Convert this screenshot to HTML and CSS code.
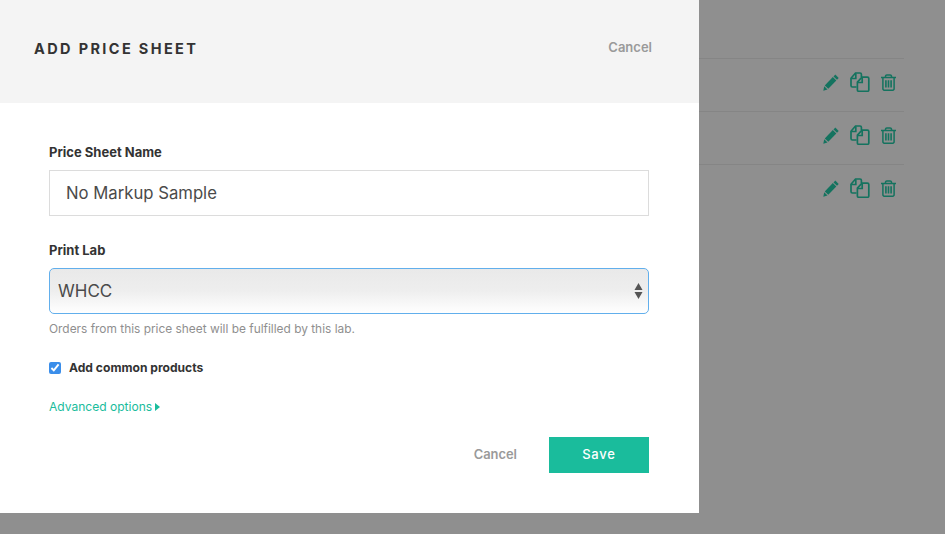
FILE: index.html
```html
<!DOCTYPE html>
<html lang="en">
<head>
<meta charset="utf-8">
<title>Add Price Sheet</title>
<link rel="stylesheet" href="styles.css">
</head>
<body>
<main class="page">
  <ul class="sheet-list">
    <li class="sheet-row">
      <svg class="icon icon-pencil" viewBox="0 0 16 17"><path d="M12.300.6 15.700 3.900 14 5.800 10.500 2.400Z"/><path d="M9.800 3.100 13.300 6.500 5.300 14.800 1.800 11.400Z"/><path d="M1.200 12.200 4.500 15.500.3 16.700Z"/></svg>
      <svg class="icon icon-copy" viewBox="0 0 20 20"><path d="M6.500 15H2.400A1.400 1.400 0 0 1 1 13.600V6.200L5.500 1H10A1.400 1.400 0 0 1 11.400 2.400V5"/><path d="M5.800 1.500V6.500H1.300"/><path d="M8.800 19.300A1.400 1.400 0 0 1 7.400 17.900V10.200L12 5.200H17.400A1.400 1.400 0 0 1 18.800 6.600V17.900A1.400 1.400 0 0 1 17.400 19.300Z"/><path d="M12.200 5.500V10.500H7.700"/></svg>
      <svg class="icon icon-trash" viewBox="0 0 15 17"><path d="M0 3.500H15"/><path d="M4.500 3.300V2.100A1.300 1.300 0 0 1 5.800.9H9.200A1.300 1.300 0 0 1 10.500 2.100V3.300"/><path d="M1.900 3.500V14.700A1.600 1.600 0 0 0 3.500 16.300H11.500A1.600 1.600 0 0 0 13.100 14.700V3.500"/><path class="bars" d="M4.900 6.300V13.500M7.500 6.300V13.500M10.100 6.300V13.500"/></svg>
    </li>
    <li class="sheet-row">
      <svg class="icon icon-pencil" viewBox="0 0 16 17"><path d="M12.300.6 15.700 3.900 14 5.800 10.500 2.400Z"/><path d="M9.800 3.100 13.300 6.500 5.300 14.800 1.800 11.400Z"/><path d="M1.200 12.200 4.500 15.500.3 16.700Z"/></svg>
      <svg class="icon icon-copy" viewBox="0 0 20 20"><path d="M6.500 15H2.400A1.400 1.400 0 0 1 1 13.600V6.200L5.500 1H10A1.400 1.400 0 0 1 11.400 2.400V5"/><path d="M5.800 1.500V6.500H1.300"/><path d="M8.800 19.300A1.400 1.400 0 0 1 7.400 17.900V10.200L12 5.200H17.400A1.400 1.400 0 0 1 18.800 6.600V17.900A1.400 1.400 0 0 1 17.400 19.300Z"/><path d="M12.200 5.500V10.500H7.700"/></svg>
      <svg class="icon icon-trash" viewBox="0 0 15 17"><path d="M0 3.500H15"/><path d="M4.500 3.300V2.100A1.300 1.300 0 0 1 5.800.9H9.200A1.300 1.300 0 0 1 10.500 2.100V3.300"/><path d="M1.900 3.500V14.700A1.600 1.600 0 0 0 3.500 16.300H11.500A1.600 1.600 0 0 0 13.100 14.700V3.500"/><path class="bars" d="M4.900 6.300V13.500M7.500 6.300V13.500M10.100 6.300V13.500"/></svg>
    </li>
    <li class="sheet-row">
      <svg class="icon icon-pencil" viewBox="0 0 16 17"><path d="M12.300.6 15.700 3.900 14 5.800 10.500 2.400Z"/><path d="M9.800 3.100 13.300 6.500 5.300 14.800 1.800 11.400Z"/><path d="M1.200 12.200 4.500 15.500.3 16.700Z"/></svg>
      <svg class="icon icon-copy" viewBox="0 0 20 20"><path d="M6.500 15H2.400A1.400 1.400 0 0 1 1 13.600V6.200L5.500 1H10A1.400 1.400 0 0 1 11.400 2.400V5"/><path d="M5.800 1.500V6.500H1.300"/><path d="M8.800 19.300A1.400 1.400 0 0 1 7.400 17.900V10.200L12 5.200H17.400A1.400 1.400 0 0 1 18.800 6.600V17.900A1.400 1.400 0 0 1 17.400 19.300Z"/><path d="M12.200 5.500V10.500H7.700"/></svg>
      <svg class="icon icon-trash" viewBox="0 0 15 17"><path d="M0 3.500H15"/><path d="M4.500 3.300V2.100A1.300 1.300 0 0 1 5.800.9H9.200A1.300 1.300 0 0 1 10.500 2.100V3.300"/><path d="M1.900 3.500V14.700A1.600 1.600 0 0 0 3.500 16.300H11.500A1.600 1.600 0 0 0 13.100 14.700V3.500"/><path class="bars" d="M4.900 6.300V13.500M7.500 6.300V13.500M10.100 6.300V13.500"/></svg>
    </li>
  </ul>
</main>

<section class="modal" aria-label="Add price sheet">
  <header class="modal-head">
    <h1 class="modal-title">ADD PRICE SHEET</h1>
    <a class="head-cancel" href="#">Cancel</a>
  </header>
  <form class="modal-body">
    <label class="field-label" for="name">Price Sheet Name</label>
    <input class="text-input" id="name" type="text" value="No Markup Sample">

    <label class="field-label lab-label" for="lab">Print Lab</label>
    <div class="select-wrap">
      <select class="select-input" id="lab"><option>WHCC</option></select>
      <svg class="select-arrows" viewBox="0 0 9 16"><path d="M4.500 0 8.500 7H.5Z"/><path d="M.5 9H8.500L4.500 16Z"/></svg>
    </div>
    <p class="hint">Orders from this price sheet will be fulfilled by this lab.</p>

    <label class="check-row">
      <input class="check" type="checkbox" checked>
      <span>Add common products</span>
    </label>

    <a class="advanced" href="#">Advanced options<span class="caret"></span></a>

    <div class="actions">
      <a class="foot-cancel" href="#">Cancel</a>
      <button class="save" type="button">Save</button>
    </div>
  </form>
</section>
</body>
</html>
```

FILE: styles.css
```css
* { box-sizing: border-box; }
html, body { margin: 0; height: 100%; }
body {
  background: #8f8f8f;
  font-family: "Inter", "Liberation Sans", sans-serif;
  overflow: hidden;
}
.page { padding: 58px 41px 0 0; }
.sheet-list { list-style: none; margin: 0 0 0 auto; padding: 0; width: 206px; }
.sheet-row {
  height: 53px;
  border-top: 1px solid #858585;
  display: flex;
  align-items: center;
  justify-content: flex-end;
  padding: 0 8px 6px 0;
  gap: 11px;
}
.icon { display: block; }
.icon-pencil { width: 16px; height: 17px; fill: #14735f; }
.icon-copy { width: 20px; height: 20px; fill: none; stroke: #14735f; stroke-width: 1.7; }
.icon-trash { width: 15px; height: 17px; fill: none; stroke: #14735f; stroke-width: 1.5; }
.bars { stroke-width: 1.6; }

.modal {
  position: absolute;
  top: 0;
  left: 0;
  width: 699px;
  height: 513px;
  background: #fff;
}
.modal-head {
  height: 103px;
  background: #f4f4f4;
  display: flex;
  justify-content: space-between;
  padding: 40px 47px 0 34px;
}
.modal-title {
  margin: 0;
  font-size: 14.500px;
  line-height: 17px;
  font-weight: 700;
  letter-spacing: 2.370px;
  color: #333;
}
.head-cancel {
  font-size: 13px;
  line-height: 15px;
  font-weight: 600;
  color: #9a9a9a;
  text-decoration: none;
}
.modal-body { padding: 41px 50px 0 49px; display: flex; flex-direction: column; }
.field-label {
  font-size: 13px;
  line-height: 16px;
  font-weight: 700;
  color: #333;
}
.lab-label { margin-top: 26px; }
.text-input {
  margin-top: 10px;
  width: 600px;
  height: 46px;
  border: 1px solid #dcdcdc;
  padding: 0 16px;
  font: 400 16.700px "Inter", sans-serif;
  color: #4a4a4a;
  background: #fff;
  outline: none;
}
.select-wrap { position: relative; margin-top: 10px; width: 600px; height: 46px; }
.select-input {
  appearance: none;
  width: 100%;
  height: 100%;
  border: 1px solid #62afec;
  border-radius: 5px;
  padding: 0 8px;
  font: 400 17px "Inter", sans-serif;
  color: #4a4a4a;
  background: linear-gradient(#e9e9e9, #eeeeee 50%, #ffffff);
  outline: none;
}
.select-arrows {
  position: absolute;
  top: 15px;
  right: 6px;
  width: 9px;
  height: 16px;
  fill: #555;
}
.hint {
  margin: 7px 0 0;
  font-size: 11.900px;
  line-height: 15px;
  color: #8f8f8f;
}
.check-row {
  margin-top: 24px;
  display: flex;
  align-items: center;
  gap: 8px;
  font-size: 12.100px;
  line-height: 16px;
  font-weight: 700;
  color: #333;
}
.check { margin: 0; width: 12px; height: 12px; accent-color: #3b8eea; }
.advanced {
  margin-top: 23px;
  font-size: 12.050px;
  line-height: 16px;
  color: #1abc9c;
  text-decoration: none;
  display: flex;
  align-items: center;
}
.caret {
  margin-left: 3px;
  border-left: 5px solid #1abc9c;
  border-top: 4px solid transparent;
  border-bottom: 4px solid transparent;
}
.actions {
  margin-top: 22px;
  display: flex;
  justify-content: flex-end;
  align-items: center;
  gap: 32px;
}
.foot-cancel {
  font-size: 12.900px;
  line-height: 16px;
  font-weight: 600;
  color: #9a9a9a;
  text-decoration: none;
}
.save {
  width: 100px;
  height: 36px;
  border: 0;
  padding: 0 0 2px;
  background: #1abc9c;
  color: #fff;
  font: 500 13px "Inter", sans-serif;
  letter-spacing: .8px;
}
```
